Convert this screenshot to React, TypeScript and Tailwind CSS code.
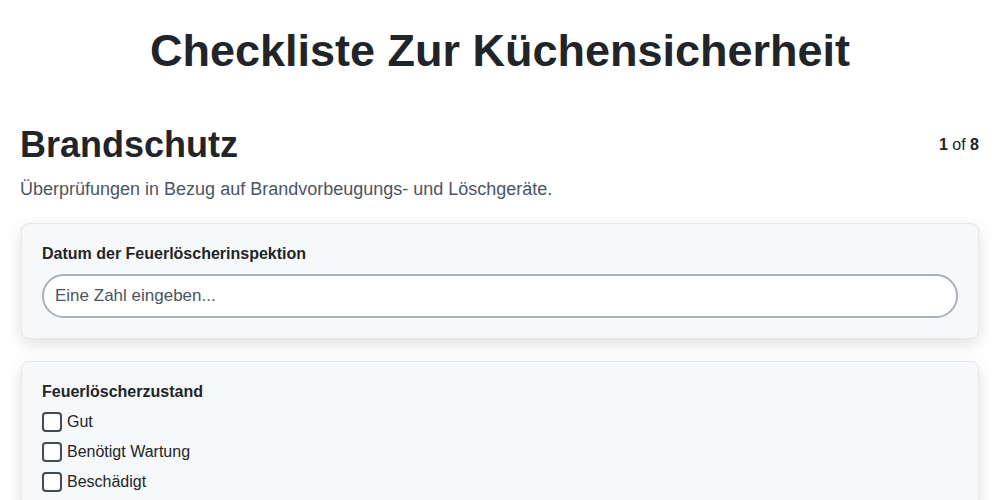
import { useState } from "react"

const conditions = ["Gut", "Benötigt Wartung", "Beschädigt"]

export default function App() {
  const [checked, setChecked] = useState<Record<string, boolean>>({})

  return (
    <div className="min-h-screen bg-white px-5 pt-6 text-[#212529] font-['Liberation_Sans',Arial,sans-serif]">
      <h1 className="text-center text-[45px] font-bold leading-[54px]">Checkliste Zur Küchensicherheit</h1>

      <div className="mt-[47px] flex items-center justify-between">
        <h2 className="text-4xl font-bold leading-10">Brandschutz</h2>
        <span className="pr-px text-base leading-6">
          <span className="font-bold">1</span> of <span className="font-bold">8</span>
        </span>
      </div>
      <p className="mt-2.5 text-lg leading-7 text-[#4b5563]">
        Überprüfungen in Bezug auf Brandvorbeugungs- und Löschgeräte.
      </p>

      <div className="mx-px mt-5 rounded-lg border border-[#e5e7eb] bg-[#f7f8fa] p-5 shadow-[0_5px_16px_rgba(0,0,0,0.13)]">
        <label className="mb-2.5 block text-base font-bold leading-5">Datum der Feuerlöscherinspektion</label>
        <input
          type="text"
          placeholder="Eine Zahl eingeben..."
          className="block h-11 w-full rounded-full border-2 border-[#aab1ba] bg-white px-[11px] text-[17px] text-[#212529] placeholder:text-[#4b5563] outline-none"
        />
      </div>

      <div className="mx-px mt-[22px] rounded-lg border border-[#e5e7eb] bg-[#f7f8fa] p-5 shadow-[0_5px_16px_rgba(0,0,0,0.13)]">
        <div className="mb-2.5 text-base font-bold leading-5">Feuerlöscherzustand</div>
        <div className="flex flex-col gap-2.5">
          {conditions.map((c) => (
            <label key={c} className="flex h-5 items-center gap-[5px] text-base">
              <input
                type="checkbox"
                checked={!!checked[c]}
                onChange={() => setChecked({ ...checked, [c]: !checked[c] })}
                className="h-5 w-5 appearance-none rounded-[4px] border-2 border-[#434a57] bg-white checked:bg-[#434a57]"
              />
              <span>{c}</span>
            </label>
          ))}
        </div>
      </div>
    </div>
  )
}
